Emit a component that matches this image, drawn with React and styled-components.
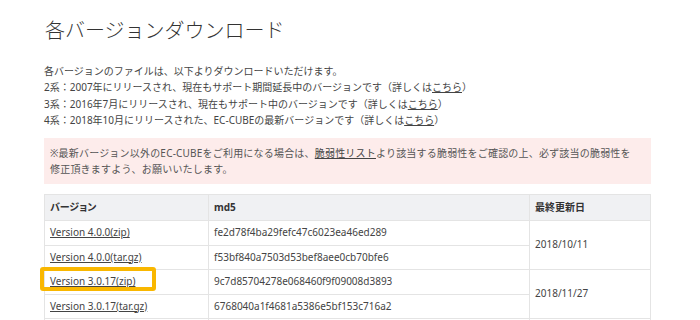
import styled, { createGlobalStyle } from "styled-components";

const GlobalStyle = createGlobalStyle`
  body {
    margin: 0;
    background: #fff;
    font-family: "Noto Sans", "Noto Sans CJK JP", sans-serif;
    color: #444;
  }
`;

const Page = styled.div`
  padding: 16px 0 0 44px;
  width: 607px;
`;

const Title = styled.h1`
  margin: 0 0 0 1px;
  font-family: "Noto Sans CJK JP", sans-serif;
  font-size: 20px;
  font-weight: 300;
  line-height: 28px;
  color: #333;
`;

const Intro = styled.div`
  margin-top: 19px;
  font-size: 10px;
  line-height: 16.3px;
  color: #444;
`;

const Link = styled.a`
  color: #444;
  text-decoration: underline;
  text-underline-offset: 1px;
`;

const Notice = styled.div`
  margin-top: 10px;
  background: #fdeceb;
  padding: 7px 6px;
  font-size: 10px;
  line-height: 16px;
  color: #555;
  letter-spacing: 0.2px;
`;

const Table = styled.table`
  margin-top: 10px;
  width: 100%;
  border-collapse: collapse;
  font-size: 10px;
  table-layout: fixed;
`;

const Th = styled.th`
  background: #f0f1f3;
  border: 1px solid #e4e4e4;
  text-align: left;
  font-weight: 700;
  padding: 4px 5px;
  line-height: 17px;
  color: #333;
  font-feature-settings: "palt";
`;

const Td = styled.td`
  position: relative;
  border: 1px solid #e4e4e4;
  padding: 4px 5px;
  line-height: 15.5px;
  color: #444;
  vertical-align: middle;
`;

const Highlight = styled.span`
  position: absolute;
  left: -5px;
  top: -3px;
  width: 116px;
  height: 24px;
  box-sizing: border-box;
  border: 4px solid #f9b700;
  border-radius: 3px;
  pointer-events: none;
`;

const rows = [
  { v: "Version 4.0.0(zip)", md5: "fe2d78f4ba29fefc47c6023ea46ed289", date: "2018/10/11" },
  { v: "Version 4.0.0(tar.gz)", md5: "f53bf840a7503d53bef8aee0cb70bfe6" },
  { v: "Version 3.0.17(zip)", md5: "9c7d85704278e068460f9f09008d3893", date: "2018/11/27", mark: true },
  { v: "Version 3.0.17(tar.gz)", md5: "6768040a1f4681a5386e5bf153c716a2" },
  { v: "Version 3.0.16(zip)", md5: "2b5a1d8f9e3c40d7a6b8c1e2f3d4a5b6", date: "2018/05/08" },
  { v: "Version 3.0.16(tar.gz)", md5: "7c1e9a0b3d5f42e8a6c7b9d0e1f2a3b4" },
];

export default function App() {
  return (
    <>
      <GlobalStyle />
      <Page>
        <Title>各バージョンダウンロード</Title>
        <Intro>
          各バージョンのファイルは、以下よりダウンロードいただけます。
          <br />
          2系：2007年にリリースされ、現在もサポート期間延長中のバージョンです（詳しくは<Link>こちら</Link>）
          <br />
          3系：2016年7月にリリースされ、現在もサポート中のバージョンです（詳しくは<Link>こちら</Link>）
          <br />
          4系：2018年10月にリリースされた、EC-CUBEの最新バージョンです（詳しくは<Link>こちら</Link>）
        </Intro>
        <Notice>
          ※最新バージョン以外のEC-CUBEをご利用になる場合は、<Link>脆弱性リスト</Link>より該当する脆弱性をご確認の上、必ず該当の脆弱性を
          <br />
          修正頂きますよう、お願いいたします。
        </Notice>
        <Table>
          <colgroup>
            <col style={{ width: 164 }} />
            <col style={{ width: 321 }} />
            <col />
          </colgroup>
          <thead>
            <tr>
              <Th>バージョン</Th>
              <Th>md5</Th>
              <Th>最終更新日</Th>
            </tr>
          </thead>
          <tbody>
            {rows.map((r) => (
              <tr key={r.v}>
                <Td>
                  {r.mark && <Highlight />}
                  <Link>{r.v}</Link>
                </Td>
                <Td>{r.md5}</Td>
                {r.date && <Td rowSpan={2}>{r.date}</Td>}
              </tr>
            ))}
          </tbody>
        </Table>
      </Page>
    </>
  );
}
